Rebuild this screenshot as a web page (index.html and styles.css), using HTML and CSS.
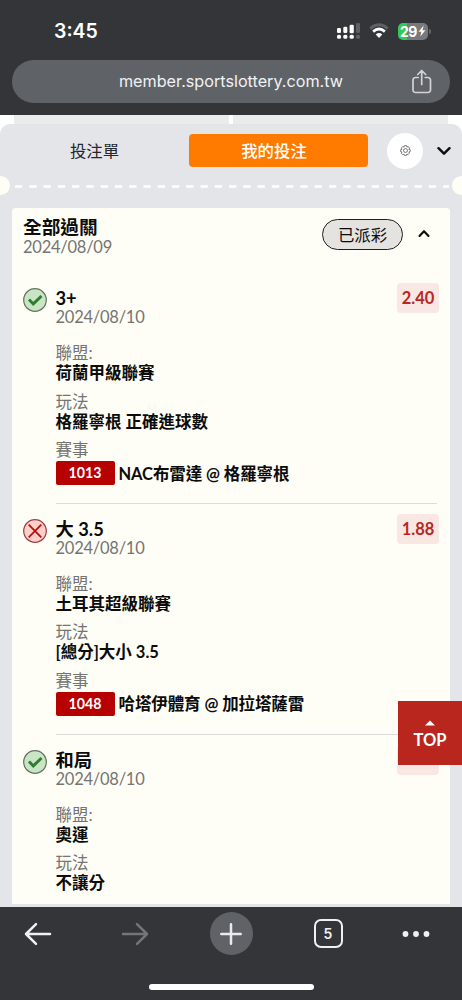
FILE: index.html
```html
<!DOCTYPE html>
<html lang="zh-Hant">
<head>
<meta charset="utf-8">
<title>我的投注</title>
<link rel="stylesheet" href="styles.css">
</head>
<body>
<div class="phone">
  <header class="browser-top">
    <div class="status">
      <span class="clock">3:45</span>
      <div class="status-icons">
        <svg class="signal" width="24" height="18" viewBox="0 0 24 18" fill="#fff">
          <rect x="0" y="6" width="4" height="5" rx="1.3"/><rect x="6.3" y="4.7" width="4" height="6.3" rx="1.3"/><rect x="12.6" y="2.7" width="4.2" height="8.6" rx="1.3"/><rect x="19" y="1" width="4" height="10" rx="1.3" fill="#5e6063"/>
          <rect x="0" y="12.8" width="4" height="4" rx="1.5"/><rect x="6.3" y="12.8" width="4" height="4" rx="1.5"/><rect x="12.6" y="12.8" width="4.2" height="4" rx="1.5"/><rect x="19" y="12.8" width="4" height="4" rx="1.5" fill="#5e6063"/>
        </svg>
        <svg class="wifi" width="20" height="16" viewBox="0 0 20 16" fill="none" stroke-width="2.8">
          <path d="M1.3 5.6Q10-2 18.7 5.6" stroke="#5e6063"/>
          <path d="M4.1 8.6Q10 3.4 15.9 8.6" stroke="#fff"/>
          <path d="M10 15l-3.3-3.6Q10 8.8 13.3 11.4z" fill="#fff"/>
        </svg>
        <div class="battery"><span>29</span><svg width="8" height="12" viewBox="0 0 8 12"><path d="M5.7.5L.6 6.7h2.8L2.3 11.5l5.1-6.3H4.5z" fill="#fff"/></svg></div>
        <i class="battery-tip"></i>
      </div>
    </div>
    <div class="address">
      <span class="url">member.sportslottery.com.tw</span>
      <svg class="share" width="22" height="26" viewBox="0 0 22 26" fill="none" stroke="#d2d4d7" stroke-width="1.7" stroke-linecap="round" stroke-linejoin="round"><path d="M7.2 8.5H4.5a2.5 2.5 0 0 0-2.5 2.5v10a2.5 2.5 0 0 0 2.5 2.5h12.5a2.5 2.5 0 0 0 2.5-2.5V11a2.5 2.5 0 0 0-2.5-2.5h-2.7M10.7 15.5V1.6M6.7 5.5l4-4 4 4"/></svg>
    </div>
  </header>

  <main class="page">
    <div class="page-tabs"><i></i><i></i></div>
    <section class="panel">
      <nav class="tabs">
        <span class="tab">投注單</span>
        <span class="tab active">我的投注</span>
        <span class="gear"><svg width="11" height="11" viewBox="0 0 24 24" fill="none" stroke="#555" stroke-width="1.7" stroke-linejoin="round"><path d="M9.5 1.5h5l.8 3 2.6-1.2 3 3.6-1.7 2.4 3 1v4l-3 1 1.5 2.6-3 3.2-2.6-1.3-1 2.7h-4.6l-1-2.7-2.6 1.3-3-3.2 1.5-2.6-3-1v-4l3-1-1.5-2.4 3-3.6 2.7 1.2z"/><circle cx="12" cy="12" r="4.3"/></svg></span>
        <svg class="chevron" width="14" height="10" viewBox="0 0 14 10" fill="none" stroke="#0c0d0e" stroke-width="2.4" stroke-linecap="round" stroke-linejoin="round"><path d="M1.5 2.2L7 7.7l5.500-5.500"/></svg>
      </nav>
      <div class="tear">
        <i class="notch"></i>
        <svg width="434" height="3" viewBox="0 0 434 3"><path d="M0 1.5H434" stroke="#fff" stroke-width="2.6" stroke-dasharray="7.3 6.97"/></svg>
        <i class="notch right"></i>
      </div>

      <article class="card">
        <header class="card-head">
          <div class="grow"><h1>全部過關</h1><p class="date">2024/08/09</p></div>
          <span class="paid">已派彩</span>
          <svg width="12" height="9" viewBox="0 0 12 9" fill="none" stroke="#0c0d0e" stroke-width="2.1" stroke-linecap="round" stroke-linejoin="round"><path d="M1.5 7L6 2.2 10.5 7"/></svg>
        </header>

        <section class="bet">
          <svg class="result" width="26" height="26" viewBox="0 0 26 26"><circle cx="13" cy="13" r="11.3" fill="#c9e5c4" stroke="#617360" stroke-width="1.2"/><path d="M7 12.5l4.3 4.4L19.5 9" fill="none" stroke="#2e7d32" stroke-width="2.9"/></svg>
          <div class="body">
            <h2>3+</h2><p class="date">2024/08/10</p>
            <dl><dt>聯盟:</dt><dd>荷蘭甲級聯賽</dd><dt>玩法</dt><dd>格羅寧根 正確進球數</dd><dt>賽事</dt><dd class="match"><span class="code">1013</span><span>NAC布雷達 @ 格羅寧根</span></dd></dl>
          </div>
          <span class="odds">2.40</span>
        </section>

        <section class="bet">
          <svg class="result" width="26" height="26" viewBox="0 0 26 26"><circle cx="13" cy="13" r="11.3" fill="#ffcfca" stroke="#9b3f3f" stroke-width="1.2"/><path d="M6.7 6.7l12.6 12.6M19.3 6.7L6.7 19.3" fill="none" stroke="#b90b0b" stroke-width="1.7"/></svg>
          <div class="body">
            <h2>大 3.5</h2><p class="date">2024/08/10</p>
            <dl><dt>聯盟:</dt><dd>土耳其超級聯賽</dd><dt>玩法</dt><dd>[總分]大小 3.5</dd><dt>賽事</dt><dd class="match"><span class="code">1048</span><span>哈塔伊體育 @ 加拉塔薩雷</span></dd></dl>
          </div>
          <span class="odds">1.88</span>
        </section>

        <section class="bet">
          <svg class="result" width="26" height="26" viewBox="0 0 26 26"><circle cx="13" cy="13" r="11.3" fill="#c9e5c4" stroke="#617360" stroke-width="1.2"/><path d="M7 12.5l4.3 4.4L19.5 9" fill="none" stroke="#2e7d32" stroke-width="2.9"/></svg>
          <div class="body">
            <h2>和局</h2><p class="date">2024/08/10</p>
            <dl><dt>聯盟:</dt><dd>奧運</dd><dt>玩法</dt><dd>不讓分</dd></dl>
          </div>
          <span class="odds"></span>
        </section>
      </article>
    </section>
    <a class="top"><svg width="10" height="6" viewBox="0 0 10 6"><path d="M0 5.5L5 .5l5 5z" fill="#fff"/></svg><span>TOP</span></a>
  </main>

  <footer class="browser-bottom">
    <div class="tools">
      <svg width="28" height="24" viewBox="0 0 28 24" fill="none" stroke="#eef0f3" stroke-width="2.5" stroke-linecap="round" stroke-linejoin="round"><path d="M26 12H2M12 2.2L2 12l10 9.8"/></svg>
      <svg width="28" height="24" viewBox="0 0 28 24" fill="none" stroke="#737578" stroke-width="2.5" stroke-linecap="round" stroke-linejoin="round"><path d="M2 12h24M16 2.2L26 12l-10 9.8"/></svg>
      <span class="plus"><svg width="22" height="22" viewBox="0 0 22 22" fill="none" stroke="#e8eaed" stroke-width="2.5" stroke-linecap="round"><path d="M11 1.3v19.4M1.3 11h19.4"/></svg></span>
      <span class="count">5</span>
      <svg width="28" height="24" viewBox="0 0 28 24" fill="#eef0f3"><circle cx="3.5" cy="12" r="2.9"/><circle cx="14" cy="12" r="2.9"/><circle cx="24.5" cy="12" r="2.9"/></svg>
    </div>
    <div class="home"></div>
  </footer>
</div>
</body>
</html>
```
FILE: styles.css
```css
* { box-sizing: border-box; }
body { margin: 0; font-family: Lato, "Noto Sans CJK TC", sans-serif; color: #0c0c0c; background: #333538; }
h1, h2, p, dl, dt, dd { margin: 0; }
svg { display: block; flex: none; }

.phone { width: 462px; height: 1000px; display: flex; flex-direction: column; overflow: hidden; }

.browser-top { height: 115px; flex: none; background: #333538; padding: 18px 12px 0; font-family: Inter, sans-serif; color: #fff; }
.status { height: 26px; display: flex; align-items: center; justify-content: space-between; padding: 0 19px 0 42px; }
.clock { font-size: 19.5px; font-weight: 600; }
.status-icons { display: flex; align-items: center; }
.wifi { margin: 0 9px 0 8px; }
.battery { width: 30px; height: 17px; border-radius: 5px; display: flex; align-items: center; justify-content: center; gap: 1px; font-size: 14px; font-weight: 700; letter-spacing: -0.5px; line-height: 17px; background: linear-gradient(90deg, #34c759 29%, #77797b 29%); }
.battery-tip { width: 2px; height: 5px; margin-left: 1px; border-radius: 0 2px 2px 0; background: #66686b; }
.address { height: 43px; margin-top: 16px; border-radius: 22px; background: #5f6368; display: grid; grid-template-columns: 46px 1fr 46px; align-items: center; padding: 0 8px; }
.url { grid-column: 2; text-align: center; font-size: 16.2px; line-height: 20px; padding-bottom: 2px; color: #f1f2f4; white-space: nowrap; }
.share { margin-left: 15px; }

.page { height: 792px; flex: none; position: relative; display: flex; flex-direction: column; background: #fff; overflow: hidden; }
.page-tabs { height: 20px; flex: none; margin-bottom: -11px; padding: 0 14px; display: flex; gap: 4px; }
.page-tabs i { flex: 1; background: #ebebec; }
.panel { height: 783px; flex: none; position: relative; border-radius: 10px 10px 0 0; background: #e4e5e9; }

.tabs { height: 53px; display: flex; align-items: center; padding-right: 11px; }
.tab { width: 189px; text-align: center; font-size: 16.4px; line-height: 33px; color: #242628; }
.tab.active { width: 179px; height: 33px; border-radius: 4px; background: #ff7b00; color: #fff; font-weight: 500; padding-right: 9px; }
.gear { width: 36px; height: 36px; margin-left: 19px; border-radius: 50%; background: #fff; display: flex; align-items: center; justify-content: center; }
.chevron { margin-left: auto; }
.tear { height: 19px; margin: -1px 0 13px; display: flex; align-items: center; }
.tear svg { margin: 2px 0 0 5px; }
.notch { width: 10px; height: 19px; flex: none; border-radius: 0 10px 10px 0; background: #fffef6; }
.notch.right { margin-left: auto; border-radius: 10px 0 0 10px; }

.card { width: 438px; height: 696px; margin: 0 12px; border-radius: 4px 4px 0 0; background: #fffef6; padding: 9px 10px 0 11px; }
.card-head { height: 71px; display: flex; align-items: flex-start; }
.grow { flex: 1; }
h1 { font-size: 18.7px; line-height: 21px; font-weight: 700; }
.date { font-size: 16.5px; letter-spacing: -0.25px; line-height: 19px; color: #747473; }
.paid { width: 81px; height: 31px; margin: 2px 15px 0 0; border: 1px solid #202020; border-radius: 16px; background: #e4e3df; font-size: 16.4px; line-height: 29px; text-align: center; }
.card-head > svg { margin: 12px 10px 0 0; }

.bet { height: 230.8px; display: flex; align-items: flex-start; }
.result { margin: -1px 8px 0 -1.5px; }
.body { width: 381.5px; height: 216px; margin-right: -40px; border-bottom: 1px solid #dddddb; flex: none; }
h2 { font-size: 18.3px; line-height: 20px; font-weight: 700; }
dl { margin-top: 16px; font-size: 16.5px; line-height: 20px; }
dt { color: #747473; }
dd { margin-bottom: 8.5px; font-weight: 700; white-space: nowrap; }
.match { height: 24px; margin: 1px 0 0; display: flex; align-items: center; gap: 4px; }
.match span:last-child { letter-spacing: -0.1px; padding-top: 1px; }
.code { width: 59px; height: 24px; border-radius: 2px; background: #b70000; color: #fff; font-size: 14.2px; line-height: 24px; text-align: center; }
.odds { width: 42px; height: 30px; margin-top: -5px; border-radius: 4px; background: #f8e7e3; color: #b9271f; font-size: 16.5px; line-height: 31px; font-weight: 700; text-align: center; }

.top { position: absolute; right: 0; top: 586px; width: 64px; height: 64px; padding-top: 19px; background: #b8261d; color: #fff; display: flex; flex-direction: column; align-items: center; font-size: 16.5px; font-weight: 700; line-height: 20px; gap: 4px; }

.browser-bottom { height: 93px; flex: none; background: #333538; padding-top: 5px; }
.tools { height: 43px; display: grid; grid-template-columns: 75px 119px 74px 120px 55px; align-items: center; justify-items: center; }
.plus { width: 43px; height: 43px; border-radius: 50%; background: #5f6368; display: flex; align-items: center; justify-content: center; }
.count { width: 29px; height: 29px; border: 2px solid #eef0f3; border-radius: 7px; color: #eef0f3; font: 600 14px/26px Inter, sans-serif; text-align: center; }
.home { width: 165px; height: 6px; margin: 29px auto 0; border-radius: 3px; background: #fff; }
```
